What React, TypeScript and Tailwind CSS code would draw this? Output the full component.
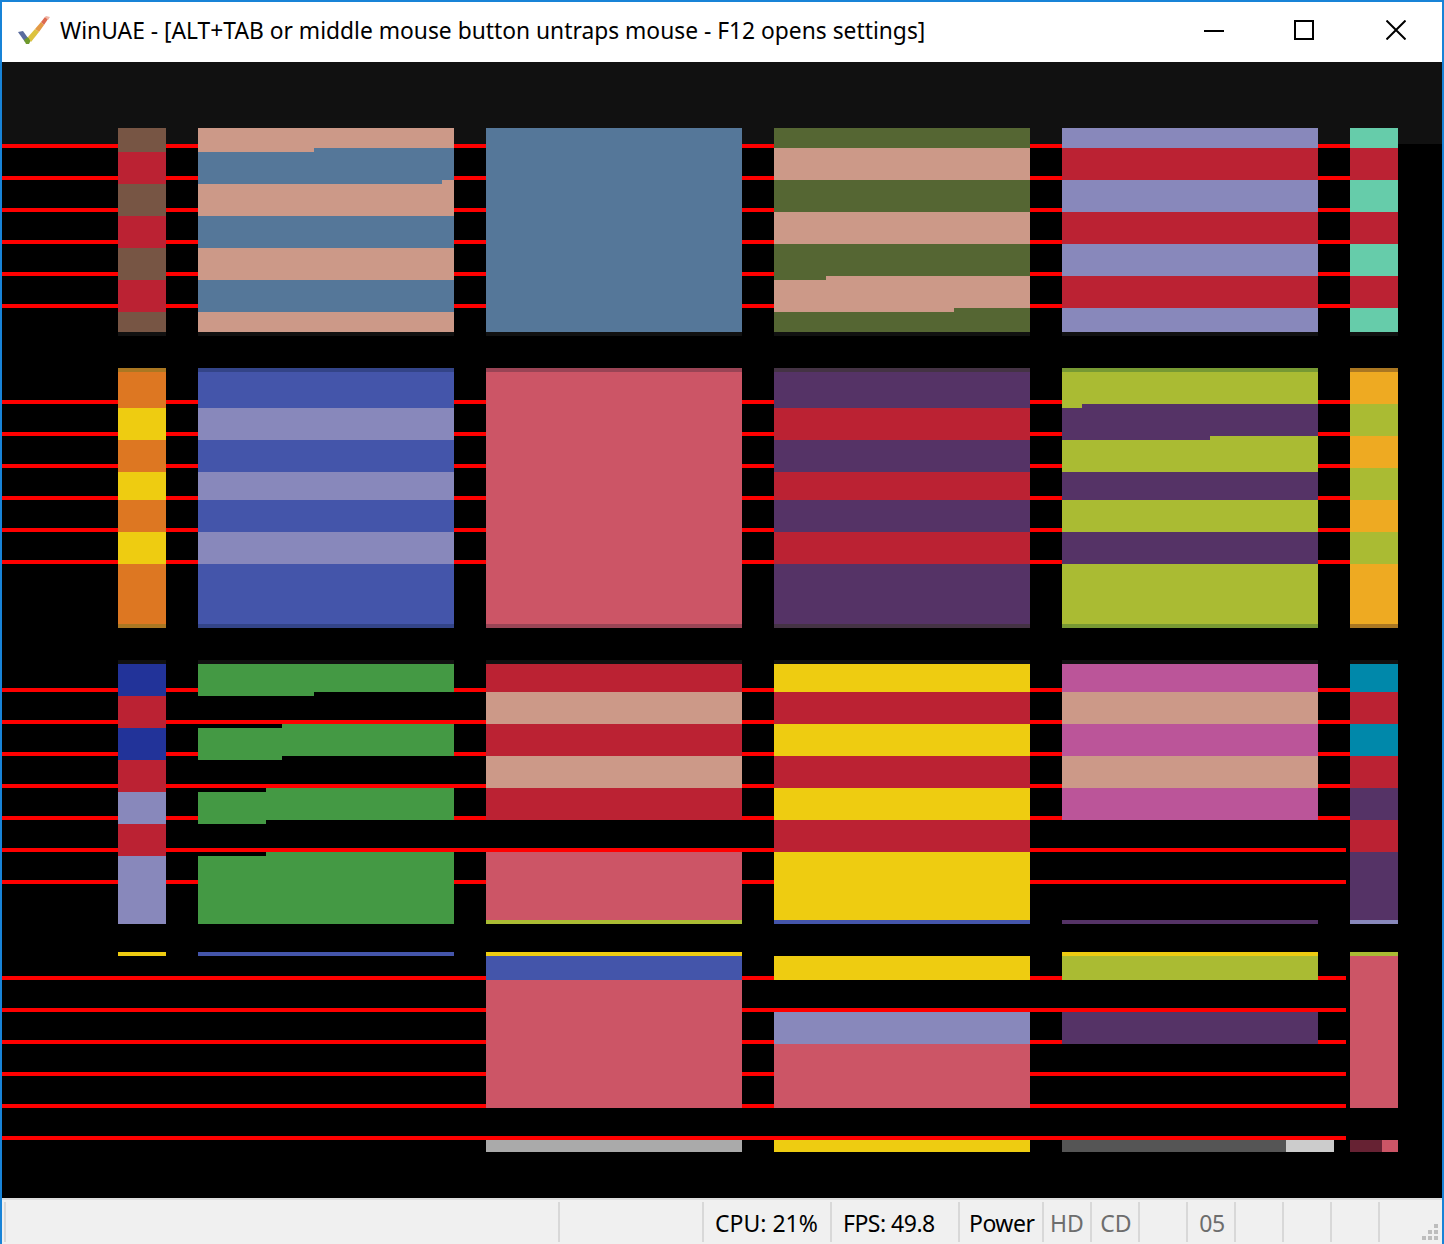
const RED = '#bb2233';
const PINK = '#cc9988';
const BLUE = '#557799';
const BROWN = '#775544';
const OLIVE = '#556633';
const LAV = '#8888bb';
const TEAL = '#66ccaa';
const ORANGE = '#dd7722';
const YELLOW = '#eecc11';
const INDIGO = '#4455aa';
const ROSE = '#cc5566';
const PURPLE = '#553366';
const LIME = '#aabb33';
const AMBER = '#eeaa22';
const NAVY = '#223399';
const GREEN = '#449944';
const MAGENTA = '#bb5599';
const CYAN = '#0088aa';
const DARK = '#111111';

type Rect = [number, number, number, number, string];

// columns of the test picture, x start and end
const A: [number, number] = [118, 166];
const B: [number, number] = [198, 454];
const C: [number, number] = [486, 742];
const D: [number, number] = [774, 1030];
const E: [number, number] = [1062, 1318];
const F: [number, number] = [1350, 1398];

// one column, a run of colours: y start, then [colour, y end]...
const stripes = (col: [number, number], y: number, runs: [string, number][]): Rect[] => {
  const out: Rect[] = [];
  let top = y;
  for (const [colour, end] of runs) {
    out.push([col[0], top, col[1], end, colour]);
    top = end;
  }
  return out;
};

const rects: Rect[] = [
  // row 1
  ...stripes(A, 128, [[BROWN, 152], [RED, 184], [BROWN, 216], [RED, 248], [BROWN, 280], [RED, 312], [BROWN, 332], [DARK, 336]]),
  ...stripes(B, 128, [[PINK, 152], [BLUE, 184], [PINK, 216], [BLUE, 248], [PINK, 280], [BLUE, 312], [PINK, 332], [DARK, 336]]),
  [314, 148, 454, 152, BLUE],
  [442, 180, 454, 184, PINK],
  ...stripes(C, 128, [[BLUE, 332], [DARK, 336]]),
  ...stripes(D, 128, [[OLIVE, 148], [PINK, 180], [OLIVE, 212], [PINK, 244], [OLIVE, 280], [PINK, 308], [OLIVE, 332], [DARK, 336]]),
  [826, 276, 1030, 280, PINK],
  [774, 308, 954, 312, PINK],
  ...stripes(E, 128, [[LAV, 148], [RED, 180], [LAV, 212], [RED, 244], [LAV, 276], [RED, 308], [LAV, 332], [DARK, 336]]),
  ...stripes(F, 128, [[TEAL, 148], [RED, 180], [TEAL, 212], [RED, 244], [TEAL, 276], [RED, 308], [TEAL, 332], [DARK, 336]]),

  // row 2
  ...stripes(A, 368, [['#aa7722', 372], [ORANGE, 408], [YELLOW, 440], [ORANGE, 472], [YELLOW, 500], [ORANGE, 532], [YELLOW, 564], [ORANGE, 624], ['#aa7722', 628]]),
  ...stripes(B, 368, [['#334488', 372], [INDIGO, 408], [LAV, 440], [INDIGO, 472], [LAV, 500], [INDIGO, 532], [LAV, 564], [INDIGO, 624], ['#334488', 628]]),
  ...stripes(C, 368, [['#994455', 372], [ROSE, 624], ['#994455', 628]]),
  ...stripes(D, 368, [['#443344', 372], [PURPLE, 408], [RED, 440], [PURPLE, 472], [RED, 500], [PURPLE, 532], [RED, 564], [PURPLE, 624], ['#443344', 628]]),
  ...stripes(E, 368, [['#779933', 372], [LIME, 404], [PURPLE, 436], [LIME, 472], [PURPLE, 500], [LIME, 532], [PURPLE, 564], [LIME, 624], ['#779933', 628]]),
  [1062, 404, 1082, 408, LIME],
  [1062, 436, 1210, 440, PURPLE],
  ...stripes(F, 368, [['#aa7722', 372], [AMBER, 404], [LIME, 436], [AMBER, 468], [LIME, 500], [AMBER, 532], [LIME, 564], [AMBER, 624], ['#aa7722', 628]]),

  // row 3
  ...stripes(A, 660, [[DARK, 664], [NAVY, 696], [RED, 728], [NAVY, 760], [RED, 792], [LAV, 824], [RED, 856], [LAV, 924]]),
  [198, 660, 454, 664, DARK],
  [198, 664, 454, 692, GREEN],
  [198, 692, 314, 696, GREEN],
  [282, 724, 454, 756, GREEN],
  [198, 728, 282, 760, GREEN],
  [266, 788, 454, 820, GREEN],
  [198, 792, 266, 824, GREEN],
  [266, 852, 454, 924, GREEN],
  [198, 856, 266, 924, GREEN],
  ...stripes(C, 660, [[DARK, 664], [RED, 692], [PINK, 724], [RED, 756], [PINK, 788], [RED, 820]]),
  ...stripes(C, 852, [[ROSE, 920], [LIME, 924]]),
  ...stripes(D, 660, [[DARK, 664], [YELLOW, 692], [RED, 724], [YELLOW, 756], [RED, 788], [YELLOW, 820], [RED, 852], [YELLOW, 920], [INDIGO, 924]]),
  ...stripes(E, 660, [[DARK, 664], [MAGENTA, 692], [PINK, 724], [MAGENTA, 756], [PINK, 788], [MAGENTA, 820]]),
  [1062, 920, 1318, 924, PURPLE],
  ...stripes(F, 660, [[DARK, 664], [CYAN, 692], [RED, 724], [CYAN, 756], [RED, 788], [PURPLE, 820], [RED, 852], [PURPLE, 920], [LAV, 924]]),

  // row 4
  [118, 952, 166, 956, YELLOW],
  [198, 952, 454, 956, INDIGO],
  ...stripes(C, 952, [[YELLOW, 956], [INDIGO, 980], [ROSE, 1108]]),
  [774, 956, 1030, 980, YELLOW],
  ...stripes(D, 1012, [[LAV, 1044], [ROSE, 1108]]),
  ...stripes(E, 952, [[YELLOW, 956], [LIME, 980]]),
  [1062, 1012, 1318, 1044, PURPLE],
  ...stripes(F, 952, [[LIME, 956], [ROSE, 1108]]),

  // bottom bars
  [486, 1140, 742, 1152, '#aaaaaa'],
  [774, 1140, 1030, 1152, YELLOW],
  [1062, 1140, 1286, 1152, '#555555'],
  [1286, 1140, 1334, 1152, '#cccccc'],
  [1350, 1140, 1382, 1152, '#662233'],
  [1382, 1140, 1398, 1152, ROSE],
];

const redLines: [number, number][] = [
  ...[144, 176, 208, 240, 272, 304, 400, 432, 464, 496, 528, 560, 688, 720, 752, 784, 816].map((y): [number, number] => [y, 1350]),
  ...[848, 880, 976, 1008, 1040, 1072, 1104, 1136].map((y): [number, number] => [y, 1346]),
];

const panes = [
  { w: 'w-[554px]', text: '', cls: '' },
  { w: 'w-[144px]', text: '', cls: '' },
  { w: 'w-[128px]', text: 'CPU: 21%', cls: 'pl-[11px] text-black' },
  { w: 'w-[128px]', text: 'FPS: 49.8', cls: 'pl-[11px] tracking-[-0.5px] text-black' },
  { w: 'w-[84px]', text: 'Power', cls: 'pl-[9px] tracking-[-0.5px] text-black' },
  { w: 'w-[48px]', text: 'HD', cls: 'justify-center text-[#6d6d6d]' },
  { w: 'w-[48px]', text: 'CD', cls: 'justify-center pl-[2px] text-[#6d6d6d]' },
  { w: 'w-[48px]', text: '', cls: '' },
  { w: 'w-[48px]', text: '05', cls: 'justify-center pl-[2px] tracking-[-0.5px] text-[#6d6d6d]' },
  { w: 'w-[48px]', text: '', cls: '' },
  { w: 'w-[48px]', text: '', cls: '' },
  { w: 'w-[48px]', text: '', cls: '' },
  { w: 'w-[62px]', text: '', cls: '' },
];

const CheckIcon = () => (
  <svg width="32" height="28" viewBox="0 0 32 28" className="shrink-0">
    <path d="M0 16 L5 15 L10 22 L7 26 Z" fill="#5a6c9e" />
    <path d="M6 24 L10 21 L13 24 L11 28 L8 28 Z" fill="#6f9a2c" />
    <path d="M10 21 L17 13 L21 16 L13 26 Z" fill="#dcc23e" />
    <path d="M17 13 L23 6 L26 9 L21 16 Z" fill="#e39a45" />
    <path d="M23 6 L27 1 L30 3 L26 9 Z" fill="#dd6a50" />
    <path d="M27 1 L28 0 L32 1 L30 4 Z" fill="#f0b5a5" />
  </svg>
);

export default function App() {
  return (
    <div className="flex h-[1244px] w-[1444px] flex-col border-x-2 border-t-2 border-[#1883d7] bg-white font-['Noto_Sans',sans-serif]">
      {/* Title bar */}
      <div className="flex h-[60px] shrink-0 items-center bg-white">
        <div className="ml-[16px] mt-[-4px]">
          <CheckIcon />
        </div>
        <span className="ml-[10px] flex-1 whitespace-nowrap pb-[1px] text-[22.8px] leading-none text-black">
          WinUAE - [ALT+TAB or middle mouse button untraps mouse - F12 opens settings]
        </span>
        <div className="flex h-full">
          <div className="flex w-[88px] items-center justify-center pb-[2px]">
            <div className="h-[2px] w-[20px] bg-black" />
          </div>
          <div className="flex w-[92px] items-center justify-center pb-[4px]">
            <div className="h-[20px] w-[20px] border-2 border-black" />
          </div>
          <div className="flex w-[92px] items-center justify-center pb-[4px]">
            <svg width="20" height="20" viewBox="0 0 20 20">
              <path d="M0.5 0.5 L19.5 19.5 M19.5 0.5 L0.5 19.5" stroke="#000" strokeWidth="2" fill="none" />
            </svg>
          </div>
        </div>
      </div>

      {/* Emulator display */}
      <div className="relative flex-1 overflow-hidden bg-black">
        <div className="h-[82px] bg-[#111111]" />
        {redLines.map(([y, x2]) => (
          <div key={y} className="absolute left-0 h-[4px] bg-[#ff0000]" style={{ top: y - 62, width: x2 - 2 }} />
        ))}
        {rects.map(([x1, y1, x2, y2, colour], i) => (
          <div
            key={i}
            className="absolute"
            style={{ left: x1 - 2, top: y1 - 62, width: x2 - x1, height: y2 - y1, background: colour }}
          />
        ))}
      </div>

      {/* Status bar */}
      <div className="relative flex h-[46px] shrink-0 border-t-2 border-[#dcdcdc] bg-[#f0f0f0] pl-[2px] text-[23px] leading-none">
        {panes.map((p, i) => (
          <div key={i} className={`my-[2px] flex items-center border-l-2 border-[#d8d8d8] pt-[2px] ${p.w} ${p.cls}`}>
            {p.text}
          </div>
        ))}
        <svg width="16" height="16" viewBox="0 0 16 16" className="absolute bottom-[4px] right-[4px]" fill="#bdbdbd">
          <rect x="12" y="0" width="4" height="4" />
          <rect x="6" y="6" width="4" height="4" />
          <rect x="12" y="6" width="4" height="4" />
          <rect x="0" y="12" width="4" height="4" />
          <rect x="6" y="12" width="4" height="4" />
          <rect x="12" y="12" width="4" height="4" />
        </svg>
      </div>
    </div>
  );
}
